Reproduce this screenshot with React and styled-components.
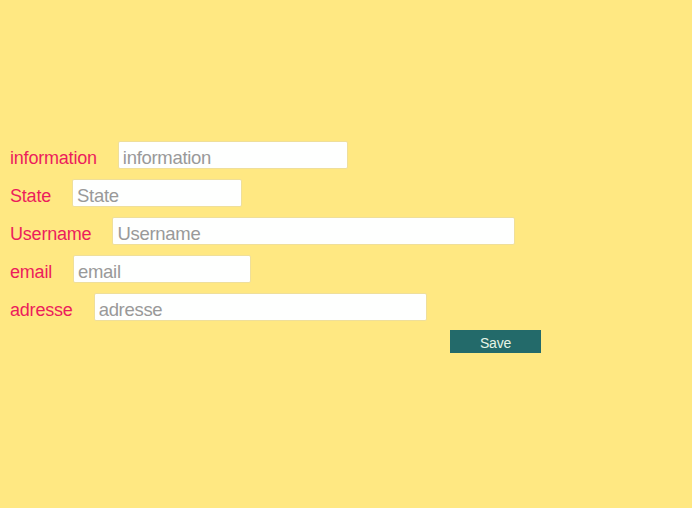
import React from "react";
import styled, { createGlobalStyle } from "styled-components";

const GlobalStyle = createGlobalStyle`
  html, body {
    margin: 0;
    padding: 0;
    height: 100%;
    background-color: #ffe882;
    font-family: "Liberation Sans", Arial, sans-serif;
  }
  #root {
    min-height: 100%;
  }
`;

const Page = styled.div`
  padding-top: 141px;
  padding-left: 10px;
`;

const Form = styled.div`
  display: flex;
  flex-direction: column;
  gap: 10px;
`;

const Row = styled.div`
  display: flex;
  flex-direction: row;
  align-items: center;
  gap: 21px;
  height: 28px;
`;

const Label = styled.label`
  font-size: 18px;
  letter-spacing: -0.2px;
  color: #ec1d5c;
  line-height: 28px;
  margin-top: 6px;
`;

const Input = styled.input`
  box-sizing: border-box;
  width: ${(p) => p.$w}px;
  height: 28px;
  margin: 0;
  padding: 5px 4px 0;
  border: 1px solid #efdf9a;
  border-radius: 2px;
  background-color: #fefffe;
  font-family: "Liberation Sans", Arial, sans-serif;
  font-size: 18.5px;
  letter-spacing: -0.3px;
  color: #333;

  &::placeholder {
    color: #999;
  }

  &:focus {
    outline: none;
  }
`;

const Actions = styled.div`
  display: flex;
  padding-left: 440px;
  margin-top: 9px;
`;

const Button = styled.button`
  width: 91px;
  height: 23px;
  border: 0;
  border-radius: 0;
  background-color: #236a6a;
  color: #e6f5e6;
  font-family: "Liberation Sans", Arial, sans-serif;
  font-size: 14px;
  letter-spacing: -0.2px;
  padding: 2px 0 0;
  cursor: pointer;
`;

const fields = [
  { name: "information", width: 230 },
  { name: "State", width: 170 },
  { name: "Username", width: 403 },
  { name: "email", width: 178 },
  { name: "adresse", width: 333 },
];

const App = () => {
  return (
    <>
      <GlobalStyle />
      <Page>
        <Form>
          {fields.map((f) => (
            <Row key={f.name}>
              <Label>{f.name}</Label>
              <Input placeholder={f.name} $w={f.width} />
            </Row>
          ))}
        </Form>
        <Actions>
          <Button>Save</Button>
        </Actions>
      </Page>
    </>
  );
};

export default App;
